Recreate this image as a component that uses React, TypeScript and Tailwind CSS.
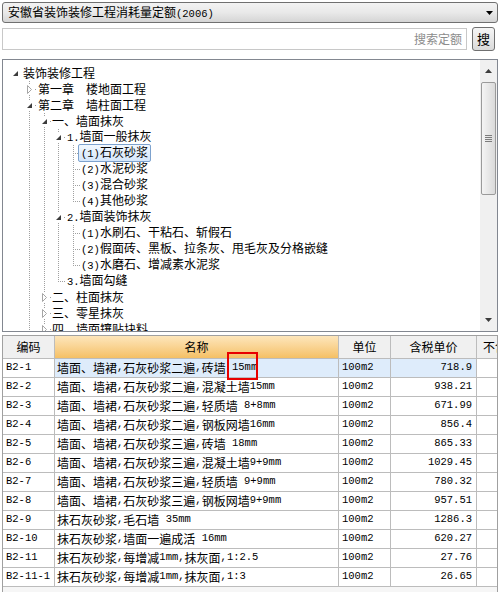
type Exp = "open" | "closed" | null;

type TreeRow = { cells: string[]; exp: Exp; label: string; selected?: boolean };

const TREE: TreeRow[] = [
  { cells: ["n"], exp: "open", label: "装饰装修工程" },
  { cells: ["n", "t"], exp: "closed", label: "第一章　楼地面工程" },
  { cells: ["n", "t"], exp: "open", label: "第二章　墙柱面工程" },
  { cells: ["n", "v", "t"], exp: "open", label: "一、墙面抹灰" },
  { cells: ["n", "v", "v", "t"], exp: "open", label: "1.墙面一般抹灰" },
  { cells: ["n", "v", "v", "v", "t"], exp: null, label: "(1)石灰砂浆", selected: true },
  { cells: ["n", "v", "v", "v", "t"], exp: null, label: "(2)水泥砂浆" },
  { cells: ["n", "v", "v", "v", "t"], exp: null, label: "(3)混合砂浆" },
  { cells: ["n", "v", "v", "v", "e"], exp: null, label: "(4)其他砂浆" },
  { cells: ["n", "v", "v", "t"], exp: "open", label: "2.墙面装饰抹灰" },
  { cells: ["n", "v", "v", "v", "t"], exp: null, label: "(1)水刷石、干粘石、斩假石" },
  { cells: ["n", "v", "v", "v", "t"], exp: null, label: "(2)假面砖、黑板、拉条灰、甩毛灰及分格嵌缝" },
  { cells: ["n", "v", "v", "v", "e"], exp: null, label: "(3)水磨石、增减素水泥浆" },
  { cells: ["n", "v", "v", "e"], exp: null, label: "3.墙面勾缝" },
  { cells: ["n", "v", "t"], exp: "closed", label: "二、柱面抹灰" },
  { cells: ["n", "v", "t"], exp: "closed", label: "三、零星抹灰" },
  { cells: ["n", "v", "t"], exp: "closed", label: "四、墙面镶贴块料" },
];

const ROWS = [
  ["B2-1", "墙面、墙裙,石灰砂浆二遍,砖墙 15mm", "100m2", "718.9"],
  ["B2-2", "墙面、墙裙,石灰砂浆二遍,混凝土墙15mm", "100m2", "938.21"],
  ["B2-3", "墙面、墙裙,石灰砂浆二遍,轻质墙 8+8mm", "100m2", "671.99"],
  ["B2-4", "墙面、墙裙,石灰砂浆二遍,钢板网墙16mm", "100m2", "856.4"],
  ["B2-5", "墙面、墙裙,石灰砂浆三遍,砖墙 18mm", "100m2", "865.33"],
  ["B2-6", "墙面、墙裙,石灰砂浆三遍,混凝土墙9+9mm", "100m2", "1029.45"],
  ["B2-7", "墙面、墙裙,石灰砂浆三遍,轻质墙 9+9mm", "100m2", "780.32"],
  ["B2-8", "墙面、墙裙,石灰砂浆三遍,钢板网墙9+9mm", "100m2", "957.51"],
  ["B2-9", "抹石灰砂浆,毛石墙 35mm", "100m2", "1286.3"],
  ["B2-10", "抹石灰砂浆,墙面一遍成活 16mm", "100m2", "620.27"],
  ["B2-11", "抹石灰砂浆,每增减1mm,抹灰面,1:2.5", "100m2", "27.76"],
  ["B2-11-1", "抹石灰砂浆,每增减1mm,抹灰面,1:3", "100m2", "26.65"],
];

// half-width ascii in a narrow mono, like the old bitmap font
function Mixed({ text }: { text: string }) {
  const parts = text.split(/([\x20-\x7e]+)/).filter(Boolean);
  return (
    <>
      {parts.map((p, i) =>
        /^[\x20-\x7e]+$/.test(p) ? (
          <span key={i} className="font-['Liberation_Mono',monospace] text-[10.5px] whitespace-pre">
            {p}
          </span>
        ) : (
          <span key={i}>{p}</span>
        )
      )}
    </>
  );
}

function Guide({ kind, exp, w }: { kind: string; exp: Exp; w: number }) {
  const dot = { stroke: "#a0a0a0", strokeDasharray: "1 1" };
  return (
    <svg width={w} height={16} className="shrink-0" shapeRendering="crispEdges">
      {(kind === "v" || kind === "t") && <line x1={7.5} y1={0} x2={7.5} y2={16} {...dot} />}
      {kind === "e" && <line x1={7.5} y1={0} x2={7.5} y2={9} {...dot} />}
      {(kind === "t" || kind === "e") && <line x1={9} y1={8.5} x2={w} y2={8.5} {...dot} />}
      {exp && <rect x={2} y={3} width={11} height={11} fill="white" />}
      {exp === "open" && <polygon points="10,6 10,11 5,11" fill="#3c3c3c" shapeRendering="auto" />}
      {exp === "closed" && (
        <polygon points="5.5,4.5 9.5,8.5 5.5,12.5" fill="white" stroke="#a6a6a6" shapeRendering="auto" />
      )}
    </svg>
  );
}

function Tree() {
  return (
    <div className="mx-[2px] mt-[9px] h-[273px] border border-[#828790] flex overflow-hidden bg-white">
      <div className="flex-1 overflow-hidden pl-[5px] pt-[5px]">
        {TREE.map((r, i) => (
          <div key={i} className="flex items-center h-[16px]">
            {r.cells.map((c, j) => (
              <Guide key={j} kind={c} exp={j === r.cells.length - 1 ? r.exp : null} w={j % 2 === 0 ? 14 : 15} />
            ))}
            <span
              className={
                "ml-[-2px] px-[2px] border leading-[14px] whitespace-nowrap rounded-[2px] " +
                (r.selected
                  ? "border-[#7da2ce] bg-linear-to-b from-[#f2f8fe] to-[#d5e7fb]"
                  : "border-transparent")
              }
            >
              <Mixed text={r.label} />
            </span>
          </div>
        ))}
      </div>
      <div className="w-[17px] bg-[#f0f0f0] flex flex-col items-center">
        <div className="h-[22px] flex items-center justify-center">
          <svg width={7} height={4}>
            <polygon points="0,4 3.5,0 7,4" fill="#3c3c3c" />
          </svg>
        </div>
        <div className="w-[15px] h-[113px] rounded-[2px] border border-[#9a9a9a] bg-linear-to-r from-[#f4f4f4] to-[#dadada] flex flex-col items-center justify-center gap-[1px]">
          <div className="w-[7px] h-[1px] bg-[#7c7c7c]" />
          <div className="w-[7px] h-[1px] bg-[#7c7c7c]" />
          <div className="w-[7px] h-[1px] bg-[#7c7c7c]" />
          <div className="w-[7px] h-[1px] bg-[#7c7c7c]" />
        </div>
        <div className="flex-1" />
        <div className="h-[22px] flex items-center justify-center">
          <svg width={7} height={4}>
            <polygon points="0,0 7,0 3.5,4" fill="#3c3c3c" />
          </svg>
        </div>
      </div>
    </div>
  );
}

function Grid() {
  const cols = "grid grid-cols-[52px_284px_52px_86px_1fr]";
  return (
    <div className="mx-[2px] mt-[3px] flex-1 border-x border-t border-[#a0a0a0] bg-[#f6f6f6] overflow-hidden">
      <div className={cols + " h-[23px] border-b border-[#bcbcbc]"}>
        <div className="border-r border-[#bcbcbc] bg-[#f0f0f0] flex items-center justify-center">编码</div>
        <div className="border-r border-[#bcbcbc] bg-linear-to-b from-[#fde6bb] to-[#f5c064] flex items-center justify-center">
          名称
        </div>
        <div className="border-r border-[#bcbcbc] bg-[#f0f0f0] flex items-center justify-center">单位</div>
        <div className="border-r border-[#bcbcbc] bg-[#f0f0f0] flex items-center justify-center">含税单价</div>
        <div className="bg-[#f0f0f0] flex items-center pl-[6px] overflow-hidden whitespace-nowrap">不含税单价</div>
      </div>
      {ROWS.map((r, i) => {
        const hi = i === 0 ? "bg-[#deecfb]" : "bg-white";
        return (
          <div key={r[0]} className={cols + " h-[19px] border-b border-[#bcbcbc]"}>
            <div className="border-r border-[#bcbcbc] bg-white flex items-center pl-[3px] font-['Liberation_Mono',monospace] text-[10.5px]">
              {r[0]}
            </div>
            <div className={"border-r border-[#bcbcbc] flex items-center pl-[2px] whitespace-nowrap overflow-hidden " + hi}>
              <Mixed text={r[1]} />
            </div>
            <div className={"border-r border-[#bcbcbc] flex items-center pl-[3px] font-['Liberation_Mono',monospace] text-[10.5px] " + hi}>
              {r[2]}
            </div>
            <div className={"border-r border-[#bcbcbc] flex items-center justify-end pr-[4px] font-['Liberation_Mono',monospace] text-[10.5px] " + hi}>
              {r[3]}
            </div>
            <div className="bg-white" />
          </div>
        );
      })}
    </div>
  );
}

export default function App() {
  return (
    <div className="relative w-[500px] h-[592px] bg-white flex flex-col overflow-hidden text-[12px] text-black font-['Noto_Sans_CJK_SC','Noto_Sans',sans-serif]">
      <div className="px-[2px] pt-[2px]">
        <div className="h-[21px] border border-[#707070] rounded-[3px] bg-linear-to-b from-[#f3f3f3] via-[#e9e9e9] to-[#d5d5d5] flex items-center pl-[5px] pr-[4px]">
          <span className="flex-1 whitespace-nowrap">
            <Mixed text="安徽省装饰装修工程消耗量定额(2006)" />
          </span>
          <svg width={7} height={4}>
            <polygon points="0,0 7,0 3.5,4" fill="#000" />
          </svg>
        </div>
      </div>

      <div className="flex items-center h-[22px] mt-[5px] pl-[2px] pr-[5px]">
        <div className="flex-1 h-[22px] border border-[#c8c8c8] bg-white flex items-center justify-end pr-[4px] text-[#8c8c8c]">
          搜索定额
        </div>
        <button className="ml-[5px] w-[23px] h-[24px] my-[-1px] border border-[#707070] rounded-[3px] bg-linear-to-b from-[#f6f6f6] to-[#dadada] flex items-center justify-center text-[13px]">
          搜
        </button>
      </div>

      <Tree />
      <Grid />

      {/* red mark */}
      <div className="absolute left-[227px] top-[352px] w-[31px] h-[28px] border-2 border-[#e80000]" />
    </div>
  );
}
